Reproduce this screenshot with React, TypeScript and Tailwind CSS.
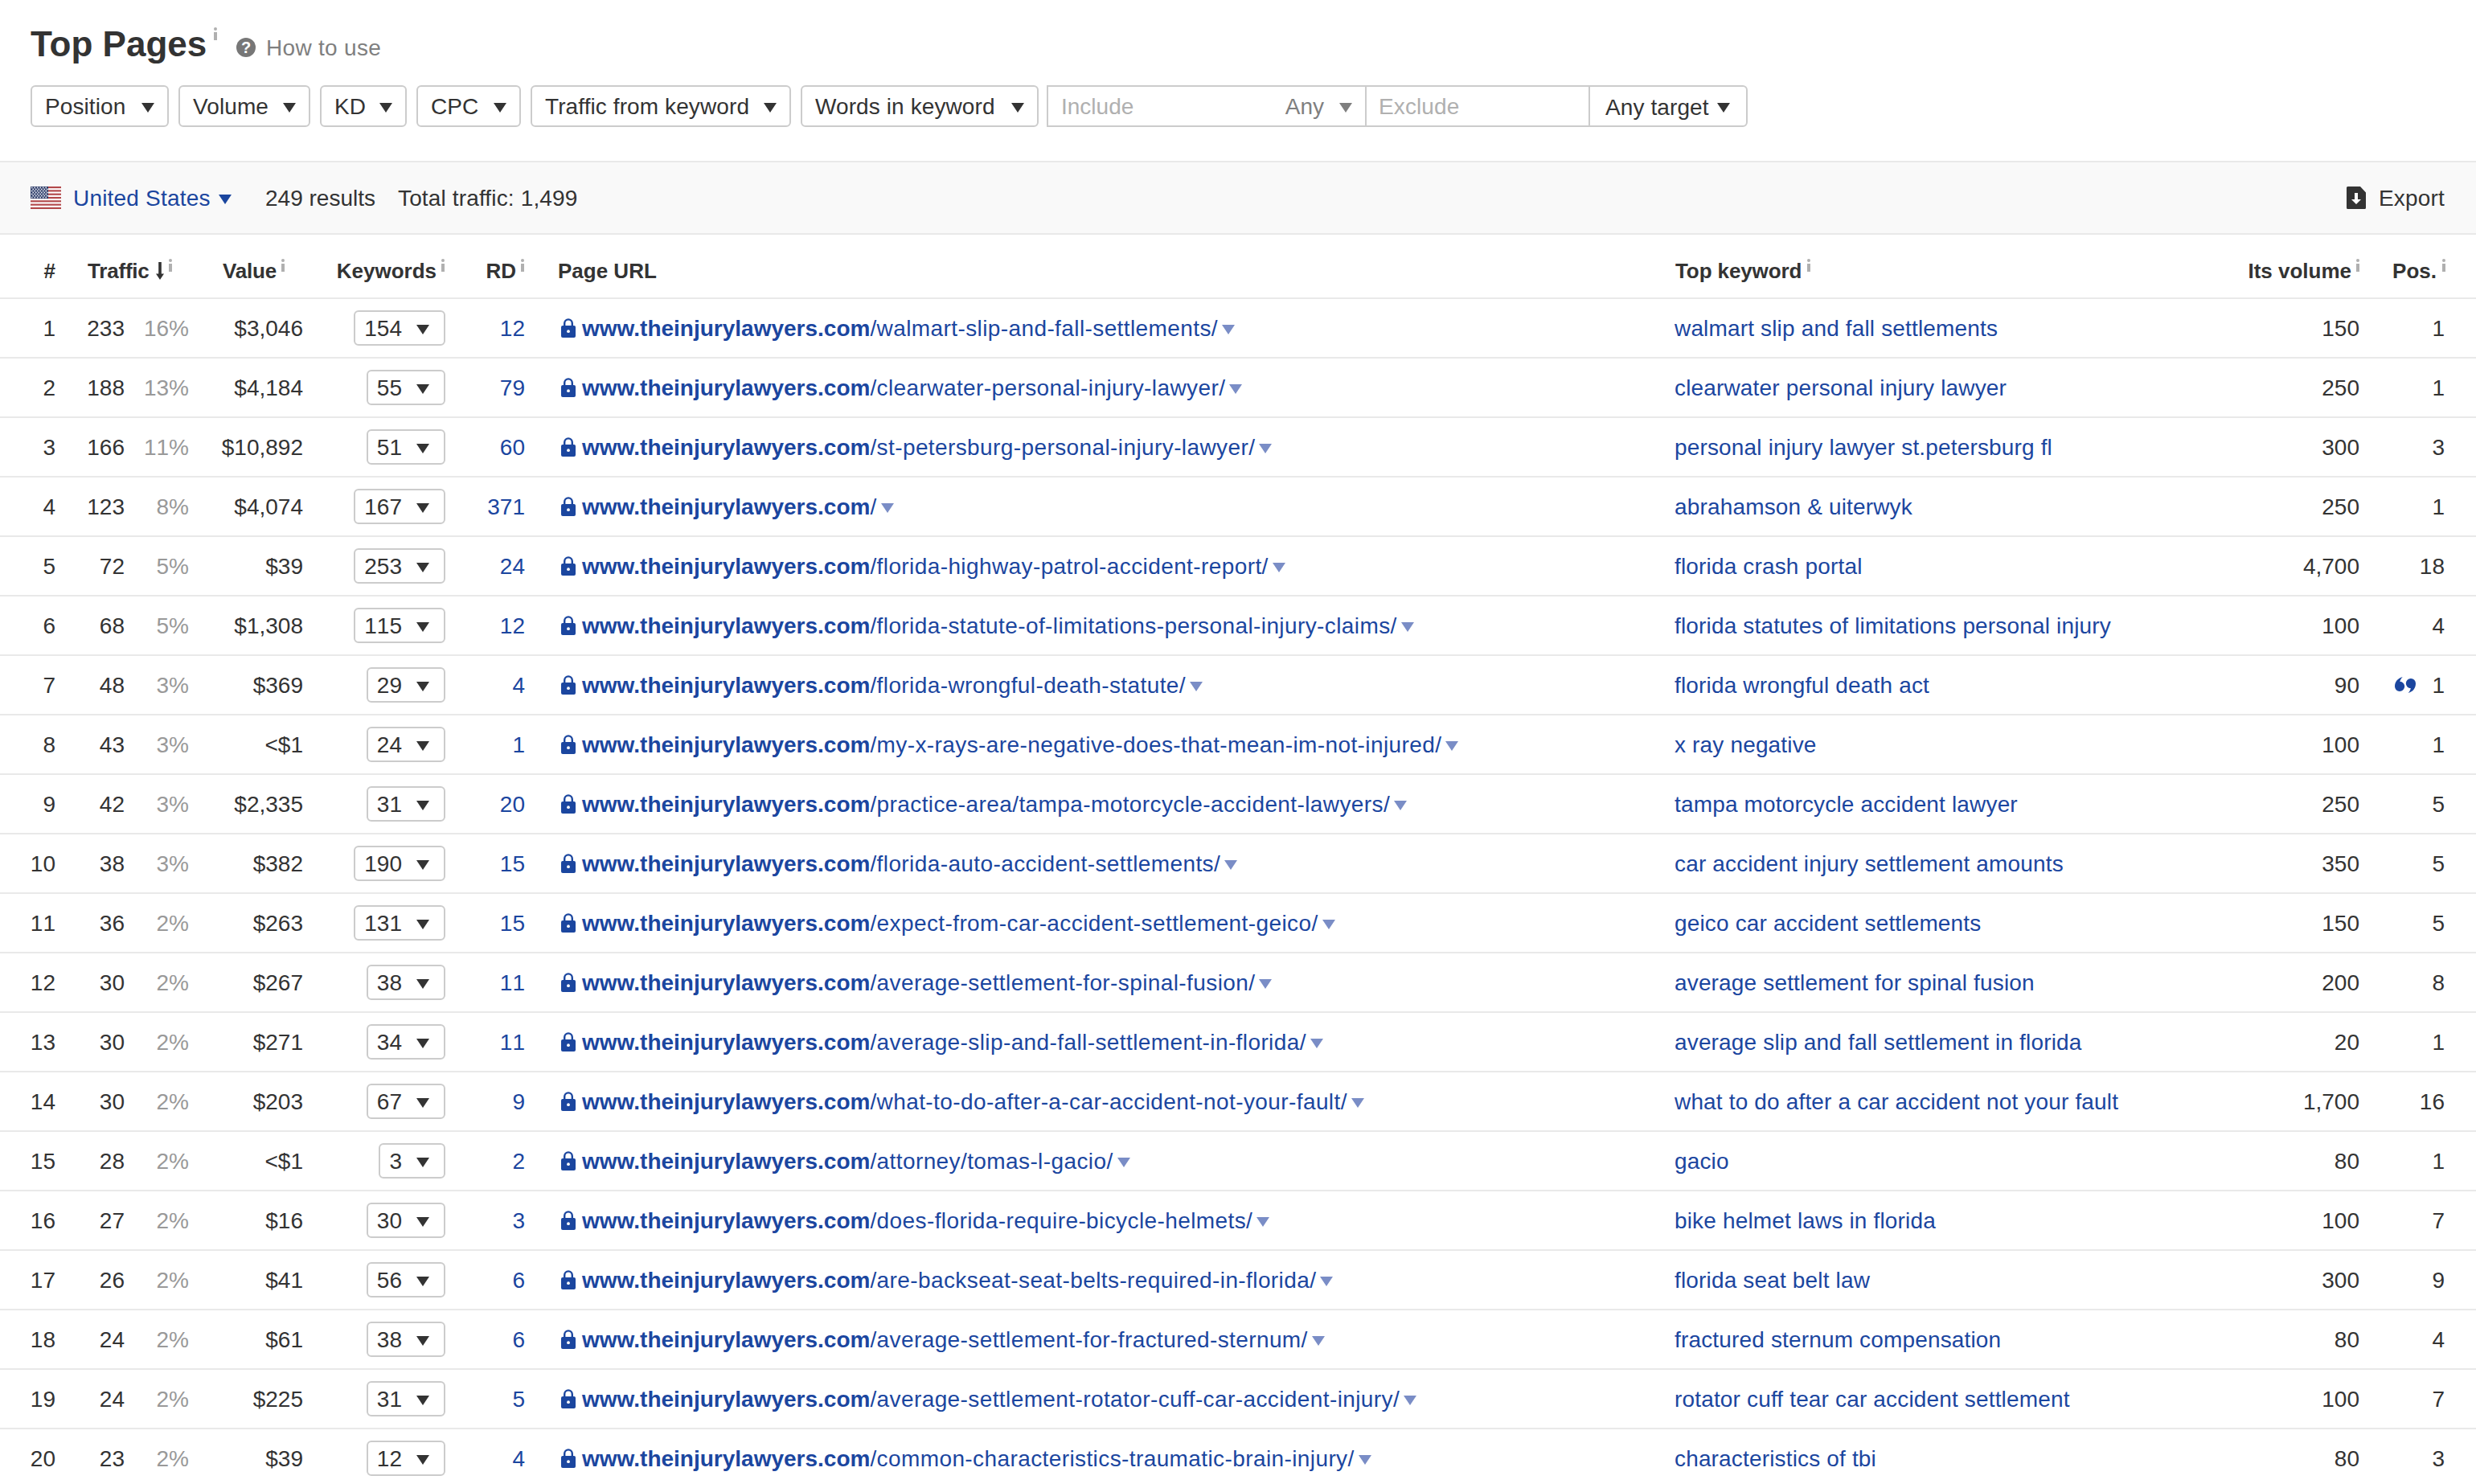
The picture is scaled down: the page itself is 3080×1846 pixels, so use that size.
import type { ReactNode } from "react";

const DOMAIN = "www.theinjurylawyers.com";

type Row = {
  traffic: number;
  share: string;
  value: string;
  keywords: number;
  rd: number;
  path: string;
  keyword: string;
  volume: string;
  pos: number;
  snippet?: boolean;
};

const rows: Row[] = [
  { traffic: 233, share: "16%", value: "$3,046", keywords: 154, rd: 12, path: "/walmart-slip-and-fall-settlements/", keyword: "walmart slip and fall settlements", volume: "150", pos: 1 },
  { traffic: 188, share: "13%", value: "$4,184", keywords: 55, rd: 79, path: "/clearwater-personal-injury-lawyer/", keyword: "clearwater personal injury lawyer", volume: "250", pos: 1 },
  { traffic: 166, share: "11%", value: "$10,892", keywords: 51, rd: 60, path: "/st-petersburg-personal-injury-lawyer/", keyword: "personal injury lawyer st.petersburg fl", volume: "300", pos: 3 },
  { traffic: 123, share: "8%", value: "$4,074", keywords: 167, rd: 371, path: "/", keyword: "abrahamson & uiterwyk", volume: "250", pos: 1 },
  { traffic: 72, share: "5%", value: "$39", keywords: 253, rd: 24, path: "/florida-highway-patrol-accident-report/", keyword: "florida crash portal", volume: "4,700", pos: 18 },
  { traffic: 68, share: "5%", value: "$1,308", keywords: 115, rd: 12, path: "/florida-statute-of-limitations-personal-injury-claims/", keyword: "florida statutes of limitations personal injury", volume: "100", pos: 4 },
  { traffic: 48, share: "3%", value: "$369", keywords: 29, rd: 4, path: "/florida-wrongful-death-statute/", keyword: "florida wrongful death act", volume: "90", pos: 1, snippet: true },
  { traffic: 43, share: "3%", value: "<$1", keywords: 24, rd: 1, path: "/my-x-rays-are-negative-does-that-mean-im-not-injured/", keyword: "x ray negative", volume: "100", pos: 1 },
  { traffic: 42, share: "3%", value: "$2,335", keywords: 31, rd: 20, path: "/practice-area/tampa-motorcycle-accident-lawyers/", keyword: "tampa motorcycle accident lawyer", volume: "250", pos: 5 },
  { traffic: 38, share: "3%", value: "$382", keywords: 190, rd: 15, path: "/florida-auto-accident-settlements/", keyword: "car accident injury settlement amounts", volume: "350", pos: 5 },
  { traffic: 36, share: "2%", value: "$263", keywords: 131, rd: 15, path: "/expect-from-car-accident-settlement-geico/", keyword: "geico car accident settlements", volume: "150", pos: 5 },
  { traffic: 30, share: "2%", value: "$267", keywords: 38, rd: 11, path: "/average-settlement-for-spinal-fusion/", keyword: "average settlement for spinal fusion", volume: "200", pos: 8 },
  { traffic: 30, share: "2%", value: "$271", keywords: 34, rd: 11, path: "/average-slip-and-fall-settlement-in-florida/", keyword: "average slip and fall settlement in florida", volume: "20", pos: 1 },
  { traffic: 30, share: "2%", value: "$203", keywords: 67, rd: 9, path: "/what-to-do-after-a-car-accident-not-your-fault/", keyword: "what to do after a car accident not your fault", volume: "1,700", pos: 16 },
  { traffic: 28, share: "2%", value: "<$1", keywords: 3, rd: 2, path: "/attorney/tomas-l-gacio/", keyword: "gacio", volume: "80", pos: 1 },
  { traffic: 27, share: "2%", value: "$16", keywords: 30, rd: 3, path: "/does-florida-require-bicycle-helmets/", keyword: "bike helmet laws in florida", volume: "100", pos: 7 },
  { traffic: 26, share: "2%", value: "$41", keywords: 56, rd: 6, path: "/are-backseat-seat-belts-required-in-florida/", keyword: "florida seat belt law", volume: "300", pos: 9 },
  { traffic: 24, share: "2%", value: "$61", keywords: 38, rd: 6, path: "/average-settlement-for-fractured-sternum/", keyword: "fractured sternum compensation", volume: "80", pos: 4 },
  { traffic: 24, share: "2%", value: "$225", keywords: 31, rd: 5, path: "/average-settlement-rotator-cuff-car-accident-injury/", keyword: "rotator cuff tear car accident settlement", volume: "100", pos: 7 },
  { traffic: 23, share: "2%", value: "$39", keywords: 12, rd: 4, path: "/common-characteristics-traumatic-brain-injury/", keyword: "characteristics of tbi", volume: "80", pos: 3 },
];

const filters = [
  { label: "Position", width: "w-[172px]" },
  { label: "Volume", width: "w-[164px]" },
  { label: "KD", width: "w-[108px]" },
  { label: "CPC", width: "w-[130px]" },
  { label: "Traffic from keyword", width: "w-[324px]" },
  { label: "Words in keyword", width: "w-[296px]" },
];

const columns =
  "grid grid-cols-[70px_86px_80px_142px_176px_100px_1430px_600px_252px_106px] items-center";

const Caret = ({ className = "" }: { className?: string }) => (
  <svg viewBox="0 0 16 12" className={`mt-1 h-3 w-4 shrink-0 fill-current ${className}`}>
    <path d="M0 0h16L8 12z" />
  </svg>
);

const Info = ({ className = "" }: { className?: string }) => (
  <svg viewBox="0 0 4 16" className={`h-4 w-1 shrink-0 fill-[#b0b0b0] ${className}`}>
    <circle cx="2" cy="2" r="2" />
    <path d="M0 6h4v10H0z" />
  </svg>
);

const Flag = () => (
  <svg viewBox="0 0 38 28" className="h-7 w-[38px] shrink-0">
    <path d="M0 0h38v28H0z" fill="#fff" />
    {[0, 1, 2, 3, 4, 5, 6].map((i) => (
      <rect key={i} y={i * 4.31} width="38" height="2.15" fill="#b2484a" />
    ))}
    <rect width="22" height="15" fill="#2b3a67" />
    {[0, 1, 2, 3, 4, 5, 6].map((r) =>
      [0, 1, 2, 3, 4, 5].map((c) => (
        <circle
          key={`${r}-${c}`}
          cx={1.7 + c * 3.5 + (r % 2 ? 1.6 : 0)}
          cy={1.5 + r * 2}
          r="0.95"
          fill="#e4e7f0"
        />
      ))
    )}
  </svg>
);

const Lock = () => (
  <svg viewBox="0 0 18 24" className="h-6 w-[18px] shrink-0">
    <path d="M4.2 10V6.2a4.8 4.8 0 0 1 9.6 0V10" fill="none" stroke="currentColor" strokeWidth="2.4" />
    <rect y="9" width="18" height="15" rx="2" fill="currentColor" />
    <circle cx="9" cy="16.2" r="1.9" fill="#fff" />
  </svg>
);

const SortArrow = () => (
  <svg viewBox="0 0 10 22" className="h-[22px] w-2.5 shrink-0 fill-current">
    <path d="M3.2 0h3.6v14.5H10L5 22 0 14.5h3.2z" />
  </svg>
);

const ExportIcon = () => (
  <svg viewBox="0 0 24 28" className="h-7 w-6 shrink-0">
    <path d="M1.5 0H17l7 7.5v19a1.5 1.5 0 0 1-1.5 1.5h-21A1.5 1.5 0 0 1 0 26.5v-25A1.5 1.5 0 0 1 1.5 0z" fill="#333" />
    <path d="M10 8h4v8h4l-6 6-6-6h4z" fill="#fff" />
  </svg>
);

const Quotes = () => (
  <svg viewBox="0 0 26 20" className="h-5 w-[26px] shrink-0 fill-[#1b469f]">
    <path d="M9.8 0C3.8 1.6 0 6 0 11.8A6.1 6.1 0 1 0 6.3 5.8C6.9 3.7 8 1.6 9.8 0z" />
    <path d="M16.6 20c6-1.6 9.4-6 9.4-11.8A6.1 6.1 0 1 0 19.9 14.2c-.6 2.1-1.5 4.2-3.3 5.8z" />
  </svg>
);

const Head = ({ children, className = "" }: { children: ReactNode; className?: string }) => (
  <div className={`flex items-center ${className}`}>{children}</div>
);

const Num = ({ children, className = "" }: { children: ReactNode; className?: string }) => (
  <div className={`pt-0.5 pr-px text-right [font-kerning:none] ${className}`}>{children}</div>
);

const App = () => {
  return (
    <div className="h-[1846px] w-[3080px] overflow-hidden bg-white font-['Liberation_Sans',Arial,sans-serif] text-[28px] leading-8 whitespace-nowrap text-[#333]">
      <header className="flex h-[106px] items-start pt-8 pl-[38px]">
        <h1 className="w-[228px] text-[44px] leading-[46px] font-bold">Top Pages</h1>
        <Info className="mt-0.5" />
        <div className="mt-2.5 ml-6 flex items-center gap-[13px] text-[#7f7f7f]">
          <span className="flex h-6 w-6 items-center justify-center rounded-full bg-[#777] text-[20px] leading-6 font-bold text-white">
            ?
          </span>
          <span className="pt-0.5 tracking-[0.3px]">How to use</span>
        </div>
      </header>

      <div className="flex h-[94px] items-start pl-[38px]">
        <div className="flex gap-3">
          {filters.map((filter) => (
            <button
              key={filter.label}
              className={`flex h-[52px] items-center justify-between rounded-md border-2 border-[#ccc] px-4 ${filter.width}`}
            >
              <span className="pt-0.5 tracking-[0.1px]">{filter.label}</span>
              <Caret />
            </button>
          ))}
        </div>
        <div className="ml-2.5 flex h-[52px] w-[872px] rounded-r-md border-2 border-[#ccc]">
          <div className="flex w-[396px] items-center border-r-2 border-[#ccc] px-4">
            <span className="flex-1 pt-0.5 text-[#b0b0b0]">Include</span>
            <span className="mr-[19px] pt-0.5 text-[#7f7f7f]">Any</span>
            <Caret className="text-[#7f7f7f]" />
          </div>
          <div className="flex w-[278px] items-center border-r-2 border-[#ccc] pt-0.5 pl-[15px] tracking-[0.1px] text-[#b0b0b0]">
            Exclude
          </div>
          <div className="flex flex-1 items-center justify-between pr-5 pl-[19px]">
            <span className="mt-1 tracking-[0.1px]">Any target</span>
            <Caret />
          </div>
        </div>
      </div>

      <div className="flex h-[92px] items-center justify-between border-y-2 border-[#e9e9e9] bg-[#f9f9f9] px-[38px]">
        <div className="flex items-center">
          <Flag />
          <span className="ml-[15px] flex w-[197px] items-center justify-between tracking-[0.2px] text-[#1b469f]">
            <span className="pt-0.5">United States</span>
            <Caret />
          </span>
          <span className="ml-[42px] w-[165px] pt-0.5">249 results</span>
          <span className="pt-0.5 tracking-[0.15px]">Total traffic: 1,499</span>
        </div>
        <div className="flex items-center gap-4 pr-px tracking-[0.2px]">
          <ExportIcon />
          <span className="pt-0.5">Export</span>
        </div>
      </div>

      <div className={`h-20 border-b-2 border-[#e9e9e9] pt-3 text-[26px] font-bold ${columns}`}>
        <Head className="justify-end pr-px">#</Head>
        <Head className="col-span-2 pl-[39px]">
          <span className="w-[85px] tracking-[-0.2px]">Traffic</span>
          <SortArrow />
          <Info className="mb-3.5 ml-1.5" />
        </Head>
        <Head className="justify-end pr-6">
          <span className="mr-1.5 tracking-[-0.2px]">Value</span>
          <Info className="mb-3.5" />
        </Head>
        <Head className="justify-end pr-px">
          <span className="mr-1.5">Keywords</span>
          <Info className="mb-3.5" />
        </Head>
        <Head className="justify-end pr-0.5">
          <span className="mr-1.5">RD</span>
          <Info className="mb-3.5" />
        </Head>
        <Head className="pl-10">Page URL</Head>
        <Head>
          <span className="mr-[7px] tracking-[-0.1px]">Top keyword</span>
          <Info className="mb-3.5" />
        </Head>
        <Head className="justify-end pr-px">
          <span className="mr-1.5">Its volume</span>
          <Info className="mb-3.5" />
        </Head>
        <Head className="justify-end">
          <span className="mr-[7px]">Pos.</span>
          <Info className="mb-3.5" />
        </Head>
      </div>

      {rows.map((row, i) => (
        <div key={row.path} className={`h-[74px] border-b-2 border-[#e9e9e9] ${columns}`}>
          <Num className="pr-0.5">{i + 1}</Num>
          <Num>{row.traffic}</Num>
          <Num className="text-[#999]">{row.share}</Num>
          <Num>{row.value}</Num>
          <div className="flex justify-end">
            <button className="flex h-11 items-center gap-[18px] rounded-md border-2 border-[#ccc] pr-[18px] pl-[11px]">
              <span className="pt-0.5 [font-kerning:none]">{row.keywords}</span>
              <Caret />
            </button>
          </div>
          <Num className="text-[#1b469f]">{row.rd}</Num>
          <div className="flex items-center pl-11 text-[#1b469f]">
            <Lock />
            <span className="ml-2 pt-0.5 font-bold">{DOMAIN}</span>
            <span className="pt-0.5 tracking-[0.4px]">{row.path}</span>
            <Caret className="ml-[5px] text-[#7a8dc6]" />
          </div>
          <div className="-ml-px pt-0.5 tracking-[0.16px] text-[#1b469f]">{row.keyword}</div>
          <Num>{row.volume}</Num>
          <div className="flex items-center justify-end">
            {row.snippet && (
              <span className="mr-5">
                <Quotes />
              </span>
            )}
            <Num>{row.pos}</Num>
          </div>
        </div>
      ))}
    </div>
  );
};

export default App;
